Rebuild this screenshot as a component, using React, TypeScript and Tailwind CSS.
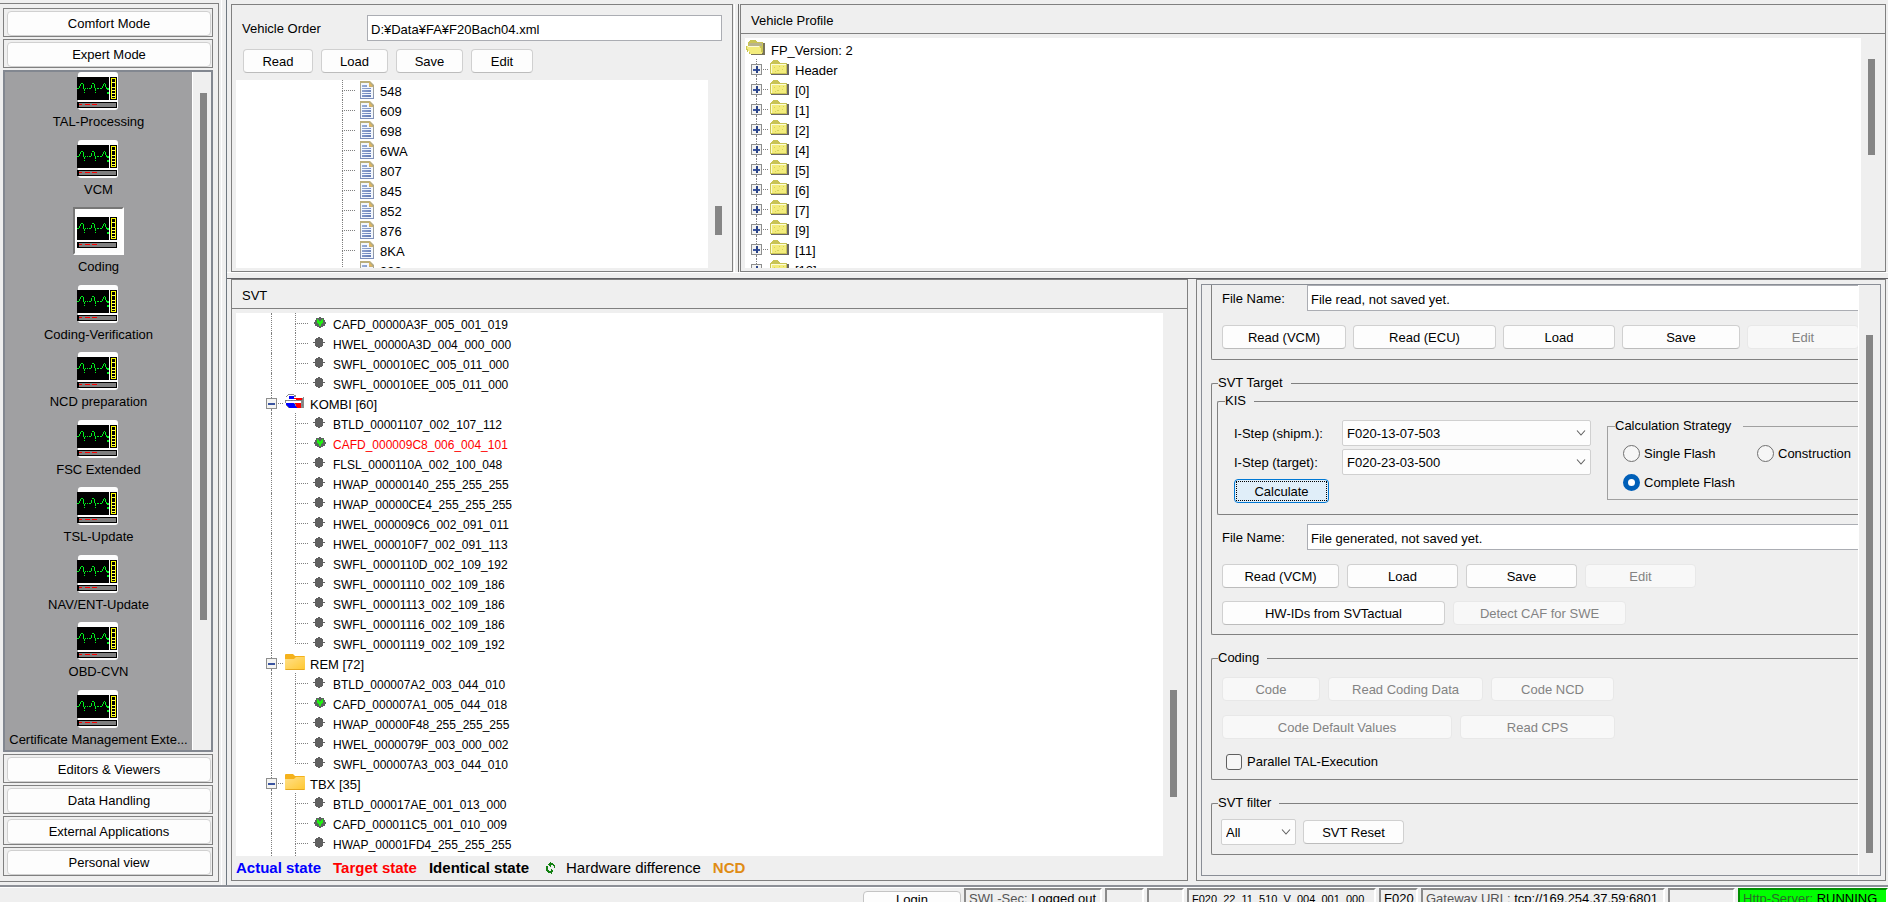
import type { ReactNode } from "react";
import clsx from "clsx";

type Leaf = { name: string; kind?: "caf"; changed?: boolean };
type Ecu = { name: string; icon: "folder" | "mixed"; items: Leaf[] };

const MODULES = [
  "TAL-Processing",
  "VCM",
  "Coding",
  "Coding-Verification",
  "NCD preparation",
  "FSC Extended",
  "TSL-Update",
  "NAV/ENT-Update",
  "OBD-CVN",
  "Certificate Management Exte...",
];

const ORDER_CODES = ["548", "609", "698", "6WA", "807", "845", "852", "876", "8KA", "992"];

const PROFILE_NODES = ["Header", "[0]", "[1]", "[2]", "[4]", "[5]", "[6]", "[7]", "[9]", "[11]", "[12]"];

const FIRST_ITEMS: Leaf[] = [
  { name: "CAFD_00000A3F_005_001_019", kind: "caf" },
  { name: "HWEL_00000A3D_004_000_000" },
  { name: "SWFL_000010EC_005_011_000" },
  { name: "SWFL_000010EE_005_011_000" },
];

const ECUS: Ecu[] = [
  {
    name: "KOMBI [60]",
    icon: "mixed",
    items: [
      { name: "BTLD_00001107_002_107_112" },
      { name: "CAFD_000009C8_006_004_101", kind: "caf", changed: true },
      { name: "FLSL_0000110A_002_100_048" },
      { name: "HWAP_00000140_255_255_255" },
      { name: "HWAP_00000CE4_255_255_255" },
      { name: "HWEL_000009C6_002_091_011" },
      { name: "HWEL_000010F7_002_091_113" },
      { name: "SWFL_0000110D_002_109_192" },
      { name: "SWFL_00001110_002_109_186" },
      { name: "SWFL_00001113_002_109_186" },
      { name: "SWFL_00001116_002_109_186" },
      { name: "SWFL_00001119_002_109_192" },
    ],
  },
  {
    name: "REM [72]",
    icon: "folder",
    items: [
      { name: "BTLD_000007A2_003_044_010" },
      { name: "CAFD_000007A1_005_044_018", kind: "caf" },
      { name: "HWAP_00000F48_255_255_255" },
      { name: "HWEL_0000079F_003_000_002" },
      { name: "SWFL_000007A3_003_044_010" },
    ],
  },
  {
    name: "TBX [35]",
    icon: "folder",
    items: [
      { name: "BTLD_000017AE_001_013_000" },
      { name: "CAFD_000011C5_001_010_009", kind: "caf" },
      { name: "HWAP_00001FD4_255_255_255" },
    ],
  },
];

export default function App() {
  return (
    <div className="flex h-screen flex-col overflow-hidden whitespace-nowrap bg-[#efefef] font-['Liberation_Sans',Arial,sans-serif] text-[13px] leading-4 text-black">
      <div className="flex min-h-0 flex-1 border-b-2 border-[#8d9097]">
        <Sidebar />
        <div className="ml-[2px] w-[6px] shrink-0 border-l border-r border-l-white border-r-[#6f7880]" />
        <main className="flex min-w-0 flex-1 flex-col pb-1">
          <div className="flex h-[272px] shrink-0 pl-1 pr-[2px] pt-1">
            <VehicleOrder />
            <div className="mx-px w-[5px] shrink-0 border-l border-r border-l-white border-r-[#707070]" />
            <VehicleProfile />
          </div>
          <div className="h-[7px] shrink-0 border-b border-t border-b-[#606064] border-t-white" />
          <div className="flex min-h-0 flex-1 gap-2 pl-1 pr-[2px]">
            <SvtTree />
            <SvtControls />
          </div>
        </main>
      </div>
      <StatusBar />
    </div>
  );
}

/* ---------- sidebar ---------- */

function Sidebar() {
  return (
    <aside className="mb-[3px] mt-[3px] flex w-[219px] shrink-0 flex-col gap-[2px] border-b border-r border-t border-[#808080] pb-[5px] pl-[3px] pr-[5px] pt-1">
      <ModeButton>Comfort Mode</ModeButton>
      <ModeButton>Expert Mode</ModeButton>
      <div className="flex min-h-0 flex-1 border-2 border-[#828790]">
        <nav className="flex min-w-0 flex-1 flex-col items-center justify-between overflow-hidden bg-[#a0a0a2] pb-[2px]">
          {MODULES.map((name) => (
            <button key={name} type="button" className="flex flex-col items-center gap-1">
              {name === "Coding" ? (
                <span className="flex h-12 w-[51px] items-center justify-center border-2 border-b-white border-l-[#777777] border-r-white border-t-[#777777] bg-[#fdfdfd]">
                  <MonitorIcon />
                </span>
              ) : (
                <MonitorIcon />
              )}
              <span>{name}</span>
            </button>
          ))}
        </nav>
        <div className="w-[19px] shrink-0 border-l border-white bg-[#efefef] pl-[7px] pt-[21px]">
          <div className="h-[527px] w-[7px] bg-[#858585]" />
        </div>
      </div>
      <ModeButton>Editors &amp; Viewers</ModeButton>
      <ModeButton>Data Handling</ModeButton>
      <ModeButton>External Applications</ModeButton>
      <ModeButton>Personal view</ModeButton>
    </aside>
  );
}

function ModeButton({ children }: { children: ReactNode }) {
  return (
    <div className="flex h-[29px] shrink-0 border border-[#808080] pl-[3px] pr-px pt-[2px]">
      <button type="button" className="flex-1 rounded-[4px] border border-[#d0d0d0] bg-[#fdfdfd] pt-px">
        {children}
      </button>
    </div>
  );
}

/* ---------- top panels ---------- */

function VehicleOrder() {
  return (
    <section className="flex w-[502px] shrink-0 flex-col border border-[#808080] pb-[3px] pt-[10px]">
      <div className="flex items-center pl-[10px] pr-[10px]">
        <label htmlFor="vehicle-order" className="w-[125px] pt-[2px]">
          Vehicle Order
        </label>
        <TextBox id="vehicle-order" value="D:¥Data¥FA¥F20Bach04.xml" />
      </div>
      <div className="mt-2 flex gap-2 pl-[11px]">
        <Button className="w-[70px]">Read</Button>
        <Button className="w-[67px]">Load</Button>
        <Button className="w-[67px]">Save</Button>
        <Button className="w-[62px]">Edit</Button>
      </div>
      <div className="mt-[7px] flex min-h-0 flex-1 pl-1">
        <ul className="min-w-0 flex-1 overflow-hidden bg-white">
          {ORDER_CODES.map((code) => (
            <li key={code} className="flex h-5 items-center pl-[106px]">
              <Branch />
              <DocIcon />
              <span className="pl-[6px] pt-[3px]">{code}</span>
            </li>
          ))}
        </ul>
        <Scrollbar className="mt-[126px] h-[29px]" />
      </div>
    </section>
  );
}

function VehicleProfile() {
  return (
    <section className="flex min-w-0 flex-1 flex-col border border-[#808080] pb-[3px]">
      <PanelTitle>Vehicle Profile</PanelTitle>
      <div className="mt-1 flex min-h-0 flex-1 pl-1">
        <ul className="min-w-0 flex-1 overflow-hidden bg-white pt-px">
          <li className="flex h-5 items-center">
            <OpenFolderIcon />
            <span className="pl-[6px] pt-[3px]">FP_Version: 2</span>
          </li>
          {PROFILE_NODES.map((node) => (
            <li key={node} className="flex h-5 items-center pl-[6px]">
              <Expander sign="plus" />
              <YellowFolderIcon />
              <span className="pl-[6px] pt-[3px]">{node}</span>
            </li>
          ))}
        </ul>
        <Scrollbar className="mt-[21px] h-24" />
      </div>
    </section>
  );
}

/* ---------- SVT tree ---------- */

function SvtTree() {
  return (
    <section className="flex min-w-0 flex-1 flex-col border border-[#808080]">
      <PanelTitle>SVT</PanelTitle>
      <div className="mt-1 flex min-h-0 flex-1 pl-1">
        <ul className="flex min-w-0 flex-1 flex-col overflow-hidden bg-white">
          {FIRST_ITEMS.map((item, i) => (
            <LeafRow key={item.name} item={item} last={i === FIRST_ITEMS.length - 1} />
          ))}
          {ECUS.map((ecu, n) => (
            <li key={ecu.name}>
              <div className="flex h-5 items-center pl-[30px]">
                <Expander sign="minus" />
                {ecu.icon === "mixed" ? <MixedFolderIcon /> : <FolderIcon />}
                <span className="pl-[5px] pt-[3px]">{ecu.name}</span>
              </div>
              <ul>
                {ecu.items.map((item, i) => (
                  <LeafRow
                    key={item.name}
                    item={item}
                    last={n < ECUS.length - 1 && i === ecu.items.length - 1}
                  />
                ))}
              </ul>
            </li>
          ))}
          <li aria-hidden="true" className="flex flex-1 pl-[35px]">
            <span className="w-6 border-l border-dotted border-[#808080]" />
            <span className="border-l border-dotted border-[#808080]" />
          </li>
        </ul>
        <Scrollbar className="mt-[377px] h-[107px]" />
      </div>
      <div className="flex h-6 shrink-0 items-center gap-3 pl-1 text-[15px]">
        <b className="text-[#0000ff]">Actual state</b>
        <b className="text-[#ff0000]">Target state</b>
        <b>Identical state</b>
        <span className="flex items-center gap-[9px] pl-1">
          <SwapIcon />
          Hardware difference
        </span>
        <b className="text-[#e08c14]">NCD</b>
      </div>
    </section>
  );
}

function LeafRow({ item, last }: { item: Leaf; last?: boolean }) {
  return (
    <li className="flex h-5 items-center pl-[35px]">
      <span className="h-full w-6 border-l border-dotted border-[#808080]" />
      <Branch last={last} />
      {item.kind === "caf" ? <CafIcon /> : <ChipIcon />}
      <span className={clsx("pl-[7px] pt-[3px] text-[12px]", item.changed && "text-[#ff0000]")}>{item.name}</span>
    </li>
  );
}

function Branch({ last }: { last?: boolean }) {
  return (
    <span className="flex h-full w-[18px] flex-col">
      <span className="h-[11px] w-[13px] border-b border-l border-dotted border-[#808080]" />
      {!last && <span className="flex-1 border-l border-dotted border-[#808080]" />}
    </span>
  );
}

function Expander({ sign }: { sign: "plus" | "minus" }) {
  return (
    <span className="flex h-full w-[19px] shrink-0 items-center">
      <span className="flex h-full w-[11px] flex-col items-center">
        <span className="h-[5px] border-l border-dotted border-[#808080]" />
        <svg width="11" height="11" shapeRendering="crispEdges">
          <rect x="0.5" y="0.5" width="10" height="10" fill="#f4f4f2" stroke="#8e8f8f" />
          <path d="M2 5h7v2h-7z" fill="#3a55a0" />
          {sign === "plus" && <path d="M5 2h2v7h-2z" fill="#2b4488" />}
        </svg>
        <span className="flex-1 border-l border-dotted border-[#808080]" />
      </span>
      <span className="ml-px w-[5px] border-t border-dotted border-[#808080]" />
    </span>
  );
}

/* ---------- SVT controls ---------- */

function SvtControls() {
  return (
    <section className="flex w-[690px] shrink-0 border border-[#808080] p-1">
      <div className="flex min-w-0 flex-1 border border-[#8a8e96]">
        <div className="min-w-0 flex-1 overflow-hidden pl-[9px]">
          <div className="rounded-bl-[2px] border-b border-l border-[#808080] pb-[10px] pl-[10px]">
            <FileName id="svt-actual-file" value="File read, not saved yet." />
            <div className="mt-[14px] flex gap-[7px]">
              <Button className="w-[124px]">Read (VCM)</Button>
              <Button className="w-[143px]">Read (ECU)</Button>
              <Button className="w-[112px]">Load</Button>
              <Button className="w-[118px]">Save</Button>
              <Button className="w-[112px]" disabled>
                Edit
              </Button>
            </div>
          </div>

          <Group title="SVT Target" className="pb-[9px] pl-[5px] pt-[2px]">
            <Group title="KIS" nested className="flex gap-4 pb-[11px] pl-4">
              <div className="pt-[11px]">
                <div className="flex items-center">
                  <label htmlFor="istep-shipm" className="w-[108px] pt-[2px]">
                    I-Step (shipm.):
                  </label>
                  <Select id="istep-shipm" value="F020-13-07-503" className="w-[249px]" />
                </div>
                <div className="mt-[3px] flex items-center">
                  <label htmlFor="istep-target" className="w-[108px] pt-[2px]">
                    I-Step (target):
                  </label>
                  <Select id="istep-target" value="F020-23-03-500" className="w-[249px]" />
                </div>
                <button
                  type="button"
                  className="mt-1 flex h-6 w-[95px] rounded-[4px] border border-[#0078d4] bg-[#e0eef9] p-px"
                >
                  <span className="flex h-full flex-1 items-center justify-center border border-dotted border-black pt-[2px]">
                    Calculate
                  </span>
                </button>
              </div>
              <fieldset className="mt-[9px] h-[82px] flex-1 border border-r-0 border-[#a0a0a0] pl-[15px]">
                <legend className="-ml-2 pr-3">Calculation Strategy</legend>
                <div className="grid grid-cols-[134px_1fr] gap-y-[11px] pt-[10px]">
                  <Radio label="Single Flash" />
                  <Radio label="Construction" />
                  <Radio label="Complete Flash" checked />
                </div>
              </fieldset>
            </Group>
            <div className="mt-[9px] pl-[5px]">
              <FileName id="svt-target-file" value="File generated, not saved yet." />
              <div className="mt-[14px] flex gap-2">
                <Button className="w-[117px]">Read (VCM)</Button>
                <Button className="w-[111px]">Load</Button>
                <Button className="w-[111px]">Save</Button>
                <Button className="w-[111px]" disabled>
                  Edit
                </Button>
              </div>
              <div className="mt-[13px] flex gap-2">
                <Button className="w-[223px]">HW-IDs from SVTactual</Button>
                <Button className="w-[173px]" disabled>
                  Detect CAF for SWE
                </Button>
              </div>
            </div>
          </Group>

          <Group title="Coding" className="pb-[9px] pl-[10px] pt-[11px]">
            <div className="flex gap-2">
              <Button className="w-[98px]" disabled>
                Code
              </Button>
              <Button className="w-[155px]" disabled>
                Read Coding Data
              </Button>
              <Button className="w-[123px]" disabled>
                Code NCD
              </Button>
            </div>
            <div className="mt-[14px] flex gap-2">
              <Button className="w-[230px]" disabled>
                Code Default Values
              </Button>
              <Button className="w-[155px]" disabled>
                Read CPS
              </Button>
            </div>
            <label className="mt-[14px] flex items-center gap-[5px] pl-1">
              <input
                type="checkbox"
                className="size-4 appearance-none rounded-[3px] border border-[#5f5f5f] bg-[#f6f6f6] checked:bg-[#0067c0]"
              />
              <span className="pt-px">Parallel TAL-Execution</span>
            </label>
          </Group>

          <Group title="SVT filter" className="flex items-center gap-[7px] pb-[9px] pl-[9px] pt-2">
            <Select id="svt-filter" value="All" label="SVT filter" className="w-[75px]" />
            <Button className="w-[101px]">SVT Reset</Button>
          </Group>
        </div>
        <div className="w-[22px] shrink-0 border-l border-white pl-[7px] pt-[50px]">
          <div className="h-[518px] w-[7px] bg-[#858585]" />
        </div>
      </div>
    </section>
  );
}

function Group({
  title,
  nested,
  className,
  children,
}: {
  title: string;
  nested?: boolean;
  className?: string;
  children: ReactNode;
}) {
  return (
    <fieldset className={clsx("rounded-l-[2px] border border-r-0 border-[#808080]", !nested && "mt-[15px]")}>
      <legend className={clsx("pr-2", nested ? "ml-[7px]" : "ml-[6px]")}>{title}</legend>
      <div className={className}>{children}</div>
    </fieldset>
  );
}

function FileName({ id, value }: { id: string; value: string }) {
  return (
    <div className="flex items-center">
      <label htmlFor={id} className="w-[85px] pt-[2px]">
        File Name:
      </label>
      <TextBox id={id} value={value} open />
    </div>
  );
}

function Radio({ label, checked }: { label: string; checked?: boolean }) {
  return (
    <label className="flex h-[18px] items-center gap-1">
      <input
        type="radio"
        name="strategy"
        defaultChecked={checked}
        className="size-[17px] appearance-none rounded-full border border-[#707070] bg-[#f6f6f6] checked:border-[5px] checked:border-[#005fb8] checked:bg-white"
      />
      <span className="pt-[2px]">{label}</span>
    </label>
  );
}

/* ---------- shared controls ---------- */

function PanelTitle({ children }: { children: ReactNode }) {
  return (
    <h2 className="flex h-[29px] shrink-0 items-center border-b border-[#808080] pl-[10px] pt-[3px]">{children}</h2>
  );
}

function Button({
  children,
  className,
  disabled,
}: {
  children: ReactNode;
  className?: string;
  disabled?: boolean;
}) {
  return (
    <button
      type="button"
      disabled={disabled}
      className={clsx(
        "h-6 shrink-0 rounded-[4px] border pt-px",
        disabled ? "border-[#e8e8e8] bg-[#f8f8f8] text-[#838383]" : "border-[#d0d0d0] border-b-[#bcbcbc] bg-[#fdfdfd]",
        className,
      )}
    >
      {children}
    </button>
  );
}

function TextBox({ id, value, open }: { id: string; value: string; open?: boolean }) {
  return (
    <input
      id={id}
      type="text"
      defaultValue={value}
      className={clsx(
        "h-[26px] min-w-0 flex-1 border border-[#abadb3] bg-white pl-[3px] pt-[2px] outline-none",
        open && "border-r-0",
      )}
    />
  );
}

function Select({ id, value, label, className }: { id: string; value: string; label?: string; className?: string }) {
  return (
    <div className={clsx("relative h-[26px]", className)}>
      <select
        id={id}
        aria-label={label}
        defaultValue={value}
        className="h-full w-full appearance-none rounded-[2px] border border-[#d0d0d0] bg-[#fdfdfd] pl-1 pt-[2px]"
      >
        <option>{value}</option>
      </select>
      <svg className="pointer-events-none absolute right-[5px] top-[10px]" width="10" height="6" fill="none">
        <path d="M1 0.5l4 4.5l4-4.5" stroke="#606060" strokeWidth="1.1" />
      </svg>
    </div>
  );
}

function Scrollbar({ className }: { className: string }) {
  return (
    <div className="w-6 shrink-0 pl-[7px]">
      <div className={clsx("w-[7px] bg-[#858585]", className)} />
    </div>
  );
}

/* ---------- status bar ---------- */

function StatusBar() {
  return (
    <footer className="flex h-[15px] shrink-0 justify-end gap-[3px] overflow-hidden border-t border-white">
      <button
        type="button"
        className="mt-[3px] h-6 w-[98px] shrink-0 rounded-[4px] border border-[#c4c4c4] bg-[#fdfdfd] pb-[6px] leading-4"
      >
        Login
      </button>
      <StatusCell className="w-[138px]">
        <span className="text-[#555555]">SWL-Sec:</span> Logged out
      </StatusCell>
      <StatusCell className="w-[39px]" />
      <StatusCell className="w-[37px]" />
      <StatusCell className="w-[189px] text-[11px]">F020_22_11_510_V_004_001_000</StatusCell>
      <StatusCell className="w-[39px]">F020</StatusCell>
      <StatusCell className="w-[244px]">
        <span className="text-[#555555]">Gateway URL:</span> tcp://169.254.37.59:6801
      </StatusCell>
      <StatusCell className="w-[67px]" />
      <StatusCell className="w-[150px]" green>
        <span className="text-[#2a6a2a]">Http-Server:</span> RUNNING
      </StatusCell>
    </footer>
  );
}

function StatusCell({ children, className, green }: { children?: ReactNode; className: string; green?: boolean }) {
  return (
    <div
      className={clsx(
        "h-[26px] shrink-0 overflow-hidden border-2 border-r-white pl-[3px] pt-px",
        green ? "border-b-[#00c000] border-l-[#009000] border-t-[#009000] bg-[#00ff00]" : "border-[#8a8a8a] border-b-white",
        className,
      )}
    >
      {children}
    </div>
  );
}

/* ---------- icons ---------- */

function MonitorIcon() {
  return (
    <svg width="41" height="38" shapeRendering="crispEdges" fill="none" className="mr-[2px]">
      <rect x="1" y="0" width="40" height="38" rx="3" fill="#fdfdfd" shapeRendering="auto" />
      <rect x="0" y="5" width="32" height="23" fill="#000" />
      <path
        d="M0 16h2v1h-2zM2 14h1v2h-1zM3 12h1v2h-1zM4 11h2v1h-2zM6 12h1v5h-1zM7 17h1v2h-1zM7 20h1v1h-1zM8 16h1v1h-1zM10 16h1v1h-1zM12 16h2v1h-2zM14 13h1v3h-1zM15 11h2v1h-2zM17 12h1v4h-1zM18 16h1v3h-1zM18 20h1v1h-1zM20 16h2v1h-2zM23 16h2v1h-2zM25 14h1v2h-1zM26 12h1v2h-1zM27 11h1v1h-1zM28 12h1v3h-1zM29 15h1v2h-1zM30 16h2v2h-2zM30 20h2v2h-2z"
        fill="#00f01e"
      />
      <rect x="33" y="5" width="7" height="23" fill="#000" />
      <rect x="34.5" y="6.5" width="4" height="20" stroke="#ffff00" />
      <path d="M35 10.5h3M35 15.5h3M35 18.5h3M35 21.5h3M35 24.5h3" stroke="#ffff66" />
      <rect x="0.5" y="30.5" width="39" height="5" fill="#808080" stroke="#000" />
      <path d="M0 30h2v6h-2z" fill="#000" />
      <path d="M2 32.5h3M8 32.5h5M15 32.5h5" stroke="#ff0000" />
    </svg>
  );
}

function DocIcon() {
  return (
    <svg width="14" height="18" className="shrink-0">
      <defs>
        <linearGradient id="doc-edge" x1="0" y1="0" x2="0" y2="1">
          <stop offset="0" stopColor="#beb078" />
          <stop offset="1" stopColor="#7b8ebc" />
        </linearGradient>
        <linearGradient id="doc-lines" x1="0" y1="0" x2="1" y2="1">
          <stop offset="0" stopColor="#9db0d8" />
          <stop offset="1" stopColor="#6079b4" />
        </linearGradient>
      </defs>
      <path d="M0 0h10l4 4v14h-14z" fill="url(#doc-edge)" />
      <path d="M1 2h8v4h4v11h-12z" fill="#f3f7fd" />
      <path d="M9 1l4 4.500h-4z" fill="#e3b75c" />
      <path
        d="M2 4h5v2h-5zM2 7h9v1h-9zM2 9h9v2h-9zM2 12h9v1h-9zM2 14h9v2h-9z"
        fill="url(#doc-lines)"
        shapeRendering="crispEdges"
      />
    </svg>
  );
}

function YellowFolderIcon() {
  return (
    <svg width="19" height="15" shapeRendering="crispEdges" className="mb-1 shrink-0">
      <path d="M17 4h2v11h-18v-1h16z" fill="#686464" />
      <path d="M1 3l2-3h5l2 3z" fill="#c9c455" />
      <rect x="0.5" y="3.5" width="16" height="10" fill="#f3ec7c" stroke="#c9c455" />
      <path d="M1 4.5h15M1.5 4v9" stroke="#fcfbd8" />
      <path d="M4 7.5h1M9 6.5h1M7 10.5h2M12 9.5h1M5 11.5h1M13 6.5h1" stroke="#d8d060" />
    </svg>
  );
}

function OpenFolderIcon() {
  return (
    <svg width="19" height="15" shapeRendering="crispEdges" className="mb-1 ml-px shrink-0">
      <path d="M15 3h4v12h-14v-1h11z" fill="#77725a" />
      <path d="M2 3l2-3h5l2 2h6v11h-14z" fill="#c9c455" />
      <path d="M3 3h13v3h-13z" fill="#b9b48a" />
      <path d="M0 6h14l2 8h-12z" fill="#f3ec7c" />
      <path d="M2 6.5h11" stroke="#fcfbd8" />
      <path d="M0.5 6v4M1.5 9v3M3.5 12v2" stroke="#c9c455" />
    </svg>
  );
}

function FolderIcon() {
  return (
    <svg width="20" height="16" className="mb-[2px] shrink-0">
      <defs>
        <linearGradient id="folder-face" x1="0" y1="0" x2="1" y2="1">
          <stop offset="0" stopColor="#ffe08a" />
          <stop offset="1" stopColor="#ffc830" />
        </linearGradient>
      </defs>
      <path d="M0 1q0-1 1-1h7l2 2h9q1 0 1 1v3h-20z" fill="#f5b21c" />
      <path d="M0 5h9l2-2h9v12q0 1-1 1h-18q-1 0-1-1z" fill="url(#folder-face)" />
      <path d="M0.5 15.5h19" stroke="#e6a820" />
    </svg>
  );
}

function MixedFolderIcon() {
  return (
    <svg width="20" height="15" shapeRendering="crispEdges" className="mb-[3px] shrink-0">
      <path d="M3 0h6v1h2v2h8v11h-16l-2-2v-3h-1v-3h1v-4z" fill="#8c8c8c" />
      <path d="M3 1h6v2h9v3h-17v-3z" fill="#ffffff" />
      <path d="M4 2h5v3h-5z" fill="#0000ff" />
      <path d="M9 4h8v2h-6v-1h-2z" fill="#ff0000" />
      <path d="M1 7h15v2h-15z" fill="#ffffff" />
      <path d="M1 9h8l3 5h-8l-3-3z" fill="#0000ff" />
      <path d="M10 9h6v5h-4z" fill="#ff0000" />
      <path d="M0 6.5h17M17.500 4v9" stroke="#808080" strokeDasharray="2 1" />
    </svg>
  );
}

function ChipIcon() {
  return (
    <svg width="13" height="12" className="shrink-0" fill="#606060" shapeRendering="crispEdges">
      <path d="M5 0h2v1h2v1h1v3h2v1h-2v3h-1v1h-2v1h-2v-1h-2v-1h-1v-3h-2v-1h2v-3h1v-1h2z" />
    </svg>
  );
}

function CafIcon() {
  return (
    <svg width="13" height="12" className="shrink-0" shapeRendering="crispEdges">
      <path
        d="M3 1h3v-1h2v1h3v2h1v2h1v2h-1v2h-2v1h-2v1h-2v-1h-2v-1h-2v-2h-1v-2h1v-2h1z"
        fill="#5c6460"
      />
      <path d="M4 2h1v1h1v1h2v-1h1v-1h1v4h-1v1h-1v2h-2v-2h-1v-1h-1z" fill="#1fef10" />
    </svg>
  );
}

function SwapIcon() {
  return (
    <svg width="12" height="14" fill="#128012" shapeRendering="crispEdges">
      <path d="M3 3h1v-1h1v-1h1v1h2v1h1v1h1v3h-1v-2h-1v-1h-2v2h-1v-1h-1v-1h-1zM9 10h-1v1h-1v2h-1v-1h-3v-1h-1v-1h-1v-5h2v4h1v1h2v-2h1v1h1v1h1z" />
    </svg>
  );
}
